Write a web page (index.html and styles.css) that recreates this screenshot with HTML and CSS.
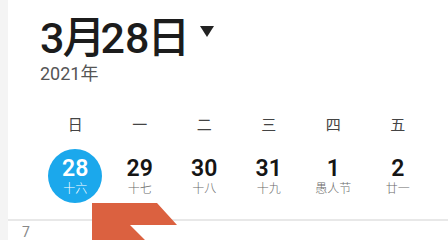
FILE: index.html
```html
<!DOCTYPE html>
<html lang="zh-CN">
<head>
<meta charset="utf-8">
<link rel="stylesheet" href="styles.css">
</head>
<body>
<div class="strip"></div>
<div class="main">
  <div class="title-row">
    <div class="title">3<span class="cjk">月</span>28<span class="cjk">日</span></div>
    <div class="caret"></div>
  </div>
  <div class="year">2021<span class="cjk">年</span></div>
  <div class="week">
    <div class="wd">日</div>
    <div class="wd">一</div>
    <div class="wd">二</div>
    <div class="wd">三</div>
    <div class="wd">四</div>
    <div class="wd">五</div>
  </div>
  <div class="dates">
    <div class="cell"><div class="day sel"><div class="num">28</div><div class="lunar">十六</div></div></div>
    <div class="cell"><div class="day"><div class="num">29</div><div class="lunar">十七</div></div></div>
    <div class="cell"><div class="day"><div class="num">30</div><div class="lunar">十八</div></div></div>
    <div class="cell"><div class="day"><div class="num">31</div><div class="lunar">十九</div></div></div>
    <div class="cell"><div class="day"><div class="num">1</div><div class="lunar">愚人节</div></div></div>
    <div class="cell"><div class="day"><div class="num">2</div><div class="lunar">廿一</div></div></div>
  </div>
  <div class="divider"></div>
  <div class="hour">7</div>
  <svg class="arrow" width="440" height="240" viewBox="0 0 440 240">
    <polygon points="84,203 149,203 169,225 122,225 137,240 84,240" fill="#db6140"/>
  </svg>
</div>
</body>
</html>
```
FILE: styles.css
```css
html, body {
  margin: 0;
  padding: 0;
}
body {
  width: 448px;
  height: 240px;
  overflow: hidden;
  display: flex;
  background: #ffffff;
  font-family: Roboto, "Noto Sans CJK SC", sans-serif;
}
.strip {
  width: 8px;
  flex: none;
  background: #f4f4f4;
}
.main {
  flex: 1;
  position: relative;
  display: flex;
  flex-direction: column;
  overflow: hidden;
}
.main > * {
  flex: none;
}
.cjk {
  font-family: "Noto Sans CJK SC", sans-serif;
  line-height: 1;
}
.title-row {
  display: flex;
  align-items: flex-start;
  margin-top: 13px;
  padding-left: 32px;
  height: 44px;
}
.title {
  font-size: 43px;
  line-height: 44px;
  height: 44px;
  font-weight: 500;
  color: #1c1c1c;
  white-space: nowrap;
}
.title .cjk {
  font-weight: 500;
  letter-spacing: -5px;
  margin-left: -2px;
}
.caret {
  margin-left: 15px;
  margin-top: 13px;
  width: 0;
  height: 0;
  border-left: 7.5px solid transparent;
  border-right: 7.5px solid transparent;
  border-top: 11px solid #222;
}
.year {
  margin-top: 5px;
  padding-left: 32px;
  height: 24px;
  line-height: 24px;
  font-size: 18px;
  color: #555;
}
.week, .dates {
  display: grid;
  grid-template-columns: repeat(6, 64.5px);
  padding-left: 35px;
}
.week {
  margin-top: 23px;
  height: 30px;
}
.wd {
  text-align: center;
  font-family: "Noto Sans CJK SC", sans-serif;
  font-size: 15px;
  line-height: 30px;
  color: #444;
}
.dates {
  margin-top: 10px;
  height: 54px;
}
.cell {
  display: flex;
  justify-content: center;
}
.day {
  width: 54px;
  height: 54px;
  border-radius: 50%;
  display: flex;
  flex-direction: column;
  align-items: center;
  justify-content: center;
}
.num {
  font-size: 23px;
  line-height: 24px;
  font-weight: 600;
  color: #151515;
}
.lunar {
  font-family: "Noto Sans CJK SC", sans-serif;
  font-size: 12px;
  font-weight: 300;
  line-height: 14px;
  color: #6a6a6a;
  white-space: nowrap;
}
.day.sel {
  background: #1ba8ec;
}
.day.sel .num, .day.sel .lunar {
  color: #fff;
}
.divider {
  margin-top: 16px;
  height: 2px;
  background: #e8e8e8;
}
.hour {
  margin-top: 1px;
  padding-left: 14px;
  font-size: 14px;
  line-height: 20px;
  color: #888;
}
.arrow {
  position: absolute;
  left: 0;
  top: 0;
  pointer-events: none;
}
```
